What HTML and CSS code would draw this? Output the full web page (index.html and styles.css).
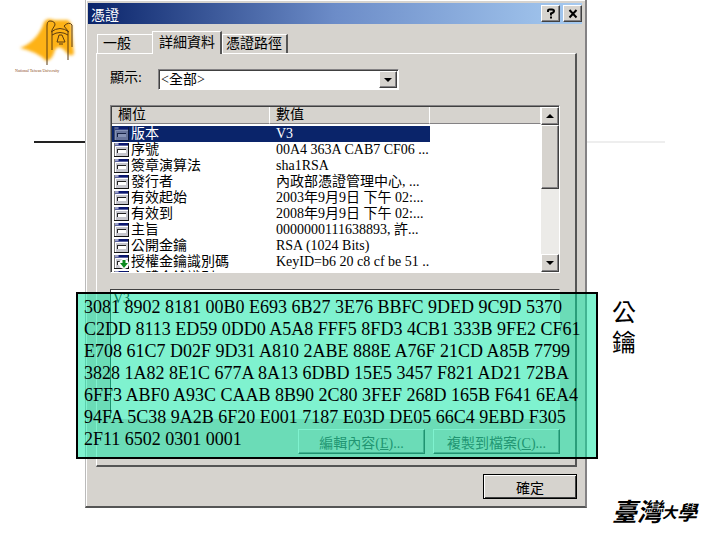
FILE: index.html
```html
<!DOCTYPE html>
<html lang="zh-Hant">
<head>
  <meta charset="UTF-8">
  <title>公鑰</title>
  <link rel="stylesheet" href="styles.css">
</head>
<body>
  <!-- icons used by the table rows -->
  <svg class="defs" aria-hidden="true">
    <symbol id="field" viewBox="0 0 16 16">
      <rect x="0" y="1" width="15" height="14" fill="#c6c6ce"/>
      <path d="M0 1h15v3H0z" fill="#5a62a0"/>
      <path d="M5 2h9" stroke="#0a1670" stroke-width="2"/>
      <path d="M1 2h3" stroke="#dde"/>
      <path d="M1.500 14V4.500H14" stroke="#fff" fill="none"/>
      <path d="M0 14.500h15M14.500 1v14" stroke="#111" fill="none"/>
      <path d="M0.500 1v13" stroke="#777"/>
      <rect x="3" y="7" width="9" height="4" fill="#fff"/>
      <path d="M3 7.500h9M3.500 7v4" stroke="#222" fill="none"/>
    </symbol>
    <symbol id="ext" viewBox="0 0 16 16">
      <use href="#field"/>
      <circle cx="10" cy="10" r="5" fill="#fff"/>
      <path d="M8.500 6h3v3H14l-4 5-4-5h2.500z" fill="#0a8a1e"/>
    </symbol>
  </svg>

  <div class="slide">
    <div class="rule"></div>

    <div class="left">
      <svg class="bell" viewBox="0 0 64 60" role="img" aria-label="National Taiwan University">
        <defs>
          <filter id="soft" x="-20%" y="-20%" width="140%" height="140%"><feGaussianBlur stdDeviation="1.500"/></filter>
        </defs>
        <path d="M5 40Q23 33 29 14Q32 9 39 12L53 12Q58 15 57 25Q58 36 59 46Q55 50 50 43Q43 36 40 42Q37 53 31 53Q23 44 5 40z" fill="#fdb214" filter="url(#soft)"/>
        <g fill="none" stroke="#5a3a10">
          <path d="M32 57V18Q32 13 35 13Q40 13 40 17L37 22V42"/>
          <path d="M53 52V23L49 18Q54 13 57 17V39"/>
          <path d="M36 24Q45 17 54 24M37 27Q45 22 53 27M42 34L44 27H47L50 34zM44 36H48"/>
        </g>
      </svg>
      <span class="caption">National Taiwan University</span>
    </div>

    <div class="stage">
      <div class="dialog">
        <div class="titlebar">
          <span class="title">憑證</span>
          <button class="tool" aria-label="Help"><svg viewBox="0 0 10 10"><path d="M2 3.500V2Q2 1 3.500 1H6Q8 1 8 2.500Q8 4 5 5V7M5 8V10" fill="none" stroke="#000" stroke-width="2"/></svg></button>
          <button class="tool" aria-label="Close"><svg viewBox="0 0 10 10"><path d="M1.500 1.500L8.500 9M8.500 1.500L1.500 9" stroke="#000" stroke-width="2"/></svg></button>
        </div>

        <div class="tabs">
          <button class="tab first">一般</button>
          <button class="tab active">詳細資料</button>
          <button class="tab last">憑證路徑</button>
        </div>

        <div class="panel">
          <div class="filter">
            <label for="show">顯示:</label>
            <div class="combo">
              <select id="show"><option>&lt;全部&gt;</option></select>
              <span class="arrow"><i class="down"></i></span>
            </div>
          </div>

          <div class="list">
            <div class="rows">
              <table>
                <thead>
                  <tr><th class="c1">欄位</th><th class="c2">數值</th><th></th></tr>
                </thead>
                <tbody>
                  <tr class="selected"><td><svg><use href="#field"/></svg>版本</td><td>V3</td><td></td></tr>
                  <tr><td><svg><use href="#field"/></svg>序號</td><td>00A4 363A CAB7 CF06 ...</td><td></td></tr>
                  <tr><td><svg><use href="#field"/></svg>簽章演算法</td><td>sha1RSA</td><td></td></tr>
                  <tr><td><svg><use href="#field"/></svg>發行者</td><td>內政部憑證管理中心, ...</td><td></td></tr>
                  <tr><td><svg><use href="#field"/></svg>有效起始</td><td>2003年9月9日 下午 02:...</td><td></td></tr>
                  <tr><td><svg><use href="#field"/></svg>有效到</td><td>2008年9月9日 下午 02:...</td><td></td></tr>
                  <tr><td><svg><use href="#field"/></svg>主旨</td><td>0000000111638893, 許...</td><td></td></tr>
                  <tr><td><svg><use href="#field"/></svg>公開金鑰</td><td>RSA (1024 Bits)</td><td></td></tr>
                  <tr><td><svg><use href="#ext"/></svg>授權金鑰識別碼</td><td>KeyID=b6 20 c8 cf be 51 ..</td><td></td></tr>
                  <tr><td><svg><use href="#field"/></svg>主體金鑰識別</td><td>4d a2 40 44 22 11</td><td></td></tr>
                </tbody>
              </table>
            </div>
            <div class="scrollbar">
              <span class="sbtn"><i class="up"></i></span>
              <span class="thumb"></span>
              <span class="sbtn end"><i class="down"></i></span>
            </div>
          </div>

          <textarea class="detail" aria-label="數值" readonly>V3</textarea>

          <div class="actions">
            <button class="btn" disabled>編輯內容(<u>E</u>)...</button>
            <button class="btn" disabled>複製到檔案(<u>C</u>)...</button>
          </div>
        </div>

        <div class="footer">
          <button class="btn ok">確定</button>
        </div>
      </div>

      <div class="key">
        3081 8902 8181 00B0 E693 6B27 3E76 BBFC 9DED 9C9D 5370<br>
        C2DD 8113 ED59 0DD0 A5A8 FFF5 8FD3 4CB1 333B 9FE2 CF61<br>
        E708 61C7 D02F 9D31 A810 2ABE 888E A76F 21CD A85B 7799<br>
        3828 1A82 8E1C 677A 8A13 6DBD 15E5 3457 F821 AD21 72BA<br>
        6FF3 ABF0 A93C CAAB 8B90 2C80 3FEF 268D 165B F641 6EA4<br>
        94FA 5C38 9A2B 6F20 E001 7187 E03D DE05 66C4 9EBD F305<br>
        2F11 6502 0301 0001
      </div>
    </div>

    <div class="right">
      <h1>公<br>鑰</h1>
      <div class="school"><span class="big">臺灣</span><span class="small">大</span><span class="mid">學</span></div>
    </div>
  </div>
</body>
</html>
```
FILE: styles.css
```css
* {
  box-sizing: border-box;
}

body {
  margin: 0;
  background: #fff;
  color: #000;
  font-family: "Liberation Serif", "Noto Sans CJK TC", serif;
  font-size: 14px;
}

button, select, textarea {
  font: inherit;
  color: inherit;
  margin: 0;
  padding: 0;
  border-radius: 0;
}

.defs {
  position: absolute;
  width: 0;
  height: 0;
}

.slide {
  position: relative;
  display: grid;
  grid-template-columns: 85px 1fr 133px;
  min-height: 100vh;
}

.rule {
  position: absolute;
  top: 141px;
  left: 34px;
  right: 55px;
  height: 2px;
  background: linear-gradient(to right, #222 8%, #eee 88%);
}

/* left column */
.left {
  padding: 8px 0 0 15px;
}

.bell {
  display: block;
  width: 64px;
  height: 60px;
}

.caption {
  display: block;
  font-size: 4px;
  line-height: 6px;
  white-space: nowrap;
  color: #8a4a20;
}

/* dialog */
.stage {
  position: relative;
}

.dialog {
  padding: 3px 3px 7px 2px;
  background: #d6d3ce;
  border-left: 1px solid #bbb;
  border-right: 2px solid #848284;
  border-bottom: 2px solid #555;
  box-shadow: inset 1px 1px #fff;
}

.titlebar {
  display: flex;
  align-items: center;
  gap: 3px;
  height: 21px;
  padding: 0 0 0 3px;
  background: linear-gradient(to right, #0a246a, #6c8cc8 50%, #a6caf0);
}

.title {
  flex: 1;
  color: #fff;
}

.tool {
  display: flex;
  align-items: center;
  justify-content: center;
  width: 19px;
  height: 17px;
  background: #d6d3ce;
  border: 1px solid;
  border-color: #fff #404040 #404040 #fff;
  box-shadow: inset -1px -1px #848284;
}

.tool svg {
  width: 10px;
  height: 11px;
}

.tabs {
  display: flex;
  align-items: flex-end;
  height: 29px;
  padding-left: 9px;
}

.tab {
  height: 19px;
  line-height: 18px;
  background: #d6d3ce;
  border: 1px solid #fff;
  border-width: 1px 0 0 1px;
  text-align: left;
  white-space: nowrap;
}

.tab.first {
  width: 55px;
  padding-left: 5px;
}

.tab.active {
  position: relative;
  width: 70px;
  height: 23px;
  margin-bottom: -1px;
  padding-left: 6px;
  border-right: 2px solid #555;
}

.tab.last {
  width: 66px;
  padding-left: 3px;
  border-right: 2px solid #555;
}

.panel {
  margin: 0 5px 0 8px;
  padding: 15px 15px 11px 13px;
  border: 1px solid #fff;
  border-right: 2px solid #555;
  border-bottom: 2px solid #555;
}

.filter {
  display: flex;
  align-items: center;
  height: 21px;
}

.filter label {
  width: 48px;
  line-height: 18px;
  padding-bottom: 3px;
}

.combo {
  position: relative;
  width: 241px;
  height: 21px;
}

.combo select {
  appearance: none;
  width: 100%;
  height: 100%;
  padding-left: 2px;
  background: #fff;
  border: 1px solid;
  border-color: #848284 #fff #fff #848284;
  box-shadow: inset 1px 1px #404040;
}

.arrow {
  position: absolute;
  top: 2px;
  right: 2px;
  width: 18px;
  height: 17px;
}

.arrow, .sbtn, .thumb {
  display: flex;
  align-items: center;
  justify-content: center;
  background: #d6d3ce;
  border: 1px solid;
  border-color: #fff #404040 #404040 #fff;
  box-shadow: inset -1px -1px #848284;
}

.down, .up {
  border: 4px solid transparent;
}

.down {
  border-top-color: #000;
  border-bottom: 0;
}

.up {
  border-bottom-color: #000;
  border-top: 0;
}

.list {
  display: flex;
  height: 168px;
  margin-top: 15px;
  background: #fff;
  border: 1px solid;
  border-color: #848284 #fff #fff #848284;
  box-shadow: inset 1px 1px #404040;
  padding: 1px 0 0 1px;
}

.rows {
  flex: 1;
  overflow: hidden;
}

table {
  width: 100%;
  table-layout: fixed;
  border-collapse: separate;
  border-spacing: 0;
}

th {
  height: 17px;
  padding: 0 0 0 6px;
  line-height: 16px;
  background: #d6d3ce;
  border-right: 1px solid #fff;
  border-bottom: 1px solid #848284;
  font-weight: normal;
  text-align: left;
}

.c1 {
  width: 158px;
}

.c2 {
  width: 160px;
}

/* small gap between the header and the first row */
tbody::before {
  content: "";
  display: table-row;
  height: 2px;
}

td {
  height: 16px;
  padding: 0 0 0 6px;
  line-height: 16px;
  white-space: nowrap;
}

td:first-child {
  padding-left: 2px;
}

td svg {
  width: 16px;
  height: 16px;
  margin-right: 1px;
  vertical-align: top;
}

.selected td:nth-child(-n+2) {
  background: #0a246a;
  color: #fff;
}

.selected svg {
  opacity: 0.5;
}

.scrollbar {
  display: flex;
  flex-direction: column;
  width: 18px;
  background: #ecebe8;
}

.sbtn {
  height: 18px;
}

.thumb {
  height: 64px;
}

.end {
  margin-top: auto;
}

.detail {
  display: block;
  width: 100%;
  height: 130px;
  margin-top: 16px;
  padding: 1px 2px;
  background: #fff;
  border: 1px solid;
  border-color: #404040 #fff #fff #404040;
  resize: none;
  overflow: hidden;
}

.actions {
  display: flex;
  justify-content: flex-end;
  gap: 8px;
  margin-top: 10px;
}

.btn {
  width: 127px;
  height: 25px;
  background: #d6d3ce;
  border: 1px solid;
  border-color: #fff #404040 #404040 #fff;
  box-shadow: inset -1px -1px #848284;
}

.btn:disabled {
  color: #444;
}

.footer {
  display: flex;
  justify-content: flex-end;
  padding: 7px 5px 0 0;
}

.btn.ok {
  width: 94px;
  border-color: #000;
  box-shadow: inset 1px 1px #fff, inset -1px -1px #404040;
}

/* the public key laid over the dialog */
.key {
  position: absolute;
  top: 292px;
  left: -9px;
  right: -11px;
  height: 167px;
  padding: 2px 6px;
  background: rgba(0, 230, 160, 0.5);
  border: 2px solid #000;
  font-size: 18px;
  line-height: 22px;
  white-space: nowrap;
}

/* right column */
.right {
  display: flex;
  flex-direction: column;
  justify-content: space-between;
  padding: 298px 0 9px 25px;
}

h1 {
  margin: 0;
  font-size: 24px;
  font-weight: normal;
  line-height: 30px;
}

.school {
  display: flex;
  align-items: center;
  font-style: italic;
  font-weight: bold;
  line-height: 36px;
}

.big {
  font-size: 25px;
}

.small {
  font-size: 15px;
}

.mid {
  font-size: 20px;
}
```
